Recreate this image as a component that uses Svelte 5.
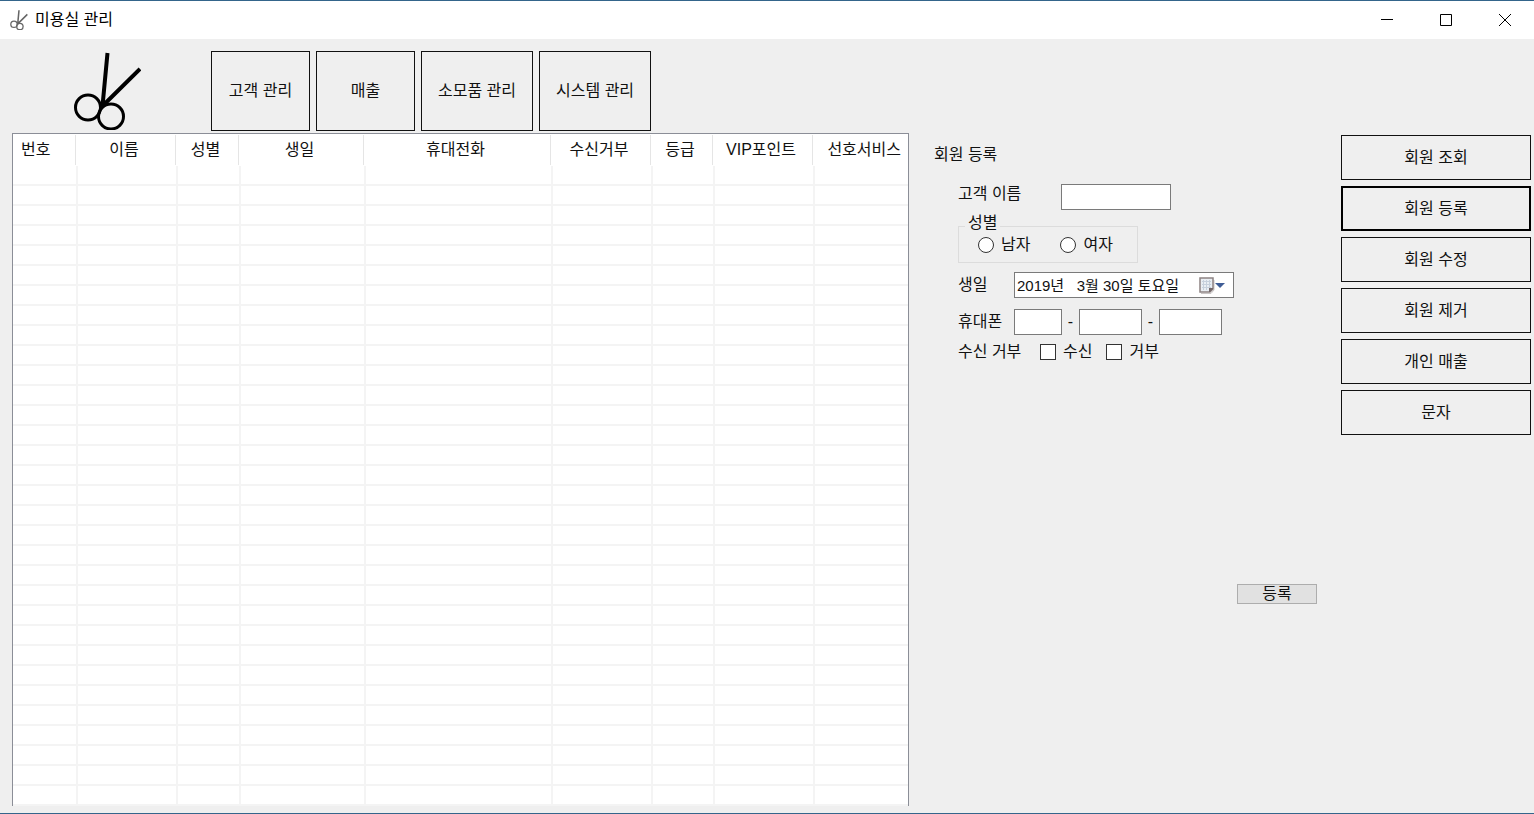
<script>
  const toolbar = ['고객 관리', '매출', '소모품 관리', '시스템 관리'];
  const columns = [
    { name: '번호', width: 63, align: 'start' },
    { name: '이름', width: 100 },
    { name: '성별', width: 63 },
    { name: '생일', width: 125 },
    { name: '휴대전화', width: 187 },
    { name: '수신거부', width: 100 },
    { name: '등급', width: 62 },
    { name: 'VIP포인트', width: 100 },
    { name: '선호서비스', width: 95, align: 'end' }
  ];
  const rows = Array.from({ length: 32 }, (_, i) => i);
  const actions = ['회원 조회', '회원 등록', '회원 수정', '회원 제거', '개인 매출', '문자'];

  let active = $state('회원 등록');
  let gender = $state('');
  let birthday = $state('2019년   3월 30일 토요일');
</script>

{#snippet scissors(blade, ring)}
  <path d="M33.500 1 L28.500 54 L66 17" stroke-width={blade} stroke-linejoin="bevel" />
  <circle cx="14" cy="55.500" r="12.500" stroke-width={ring} />
  <circle cx="37" cy="64.500" r="12.500" stroke-width={ring} />
{/snippet}

<div class="window">
  <header class="titlebar">
    <svg class="app-icon" viewBox="0 0 67 78" aria-hidden="true">{@render scissors(6, 5)}</svg>
    <h1>미용실 관리</h1>
    <div class="controls">
      <button type="button" aria-label="최소화">
        <svg viewBox="0 0 12 12"><path d="M0 5.500H12" /></svg>
      </button>
      <button type="button" aria-label="최대화">
        <svg viewBox="0 0 12 12"><path d="M.5 .5H11.500V11.500H.5Z" /></svg>
      </button>
      <button type="button" aria-label="닫기">
        <svg viewBox="0 0 12 12"><path d="M0 0L12 12M12 0L0 12" /></svg>
      </button>
    </div>
  </header>

  <nav class="toolbar">
    <svg class="logo" viewBox="0 0 67 78" aria-hidden="true">{@render scissors(4, 3)}</svg>
    <div class="tools">
      {#each toolbar as tool}
        <button type="button" class="flat">{tool}</button>
      {/each}
    </div>
  </nav>

  <main>
    <div class="list">
      <table>
        <colgroup>
          {#each columns as column}
            <col style="width: {column.width}px" />
          {/each}
        </colgroup>
        <thead>
          <tr>
            {#each columns as column}
              <th scope="col" class={column.align}>{column.name}</th>
            {/each}
          </tr>
        </thead>
        <tbody>
          {#each rows as row (row)}
            <tr>
              {#each columns as column}
                <td></td>
              {/each}
            </tr>
          {/each}
        </tbody>
      </table>
    </div>

    <form onsubmit={(event) => event.preventDefault()}>
      <h2>회원 등록</h2>
      <div class="fields">
        <div class="row name">
          <label for="customer">고객 이름</label>
          <input id="customer" type="text" />
        </div>

        <fieldset>
          <legend>성별</legend>
          <div class="options">
            <label><input type="radio" name="gender" value="남자" bind:group={gender} />남자</label>
            <label><input type="radio" name="gender" value="여자" bind:group={gender} />여자</label>
          </div>
        </fieldset>

        <div class="row birth">
          <label for="birthday">생일</label>
          <div class="picker">
            <input id="birthday" type="text" bind:value={birthday} />
            <button type="button" aria-label="달력 열기">
              <svg viewBox="0 0 26 17">
                <path d="M2 16.500H12L15 13V3" fill="none" stroke="#c9c5c5" />
                <path d="M1 1H14V12L11 15H1Z" fill="#e9eef3" stroke="#8d8383" stroke-width="1.500" />
                <path d="M3 4.500H12M3 7.500H12M3 10.500H12M4.500 3V13M7.500 3V13M10.500 3V12" stroke="#c6d0dc" fill="none" />
                <path d="M14 11V12L11 15H10V11Z" fill="#75696b" />
                <path d="M16 6H26L21 11Z" fill="#3f5d96" />
              </svg>
            </button>
          </div>
        </div>

        <div class="row phone">
          <label for="phone-first">휴대폰</label>
          <input id="phone-first" class="short" type="text" />
          <span>-</span>
          <input type="text" aria-label="휴대폰 가운데 자리" />
          <span>-</span>
          <input type="text" aria-label="휴대폰 끝자리" />
        </div>

        <div class="row consent" role="group" aria-labelledby="consent">
          <span id="consent">수신 거부</span>
          <label><input type="checkbox" />수신</label>
          <label><input type="checkbox" />거부</label>
        </div>
      </div>
      <button type="submit" class="submit">등록</button>
    </form>

    <aside>
      {#each actions as action}
        <button
          type="button"
          class="flat"
          class:active={active === action}
          onclick={() => (active = action)}>{action}</button>
      {/each}
    </aside>
  </main>
</div>

<style>
  :global(body) {
    margin: 0;
    background: #efefef;
  }

  .window {
    box-sizing: border-box;
    min-height: 100vh;
    border: solid #34658b;
    border-width: 1px 0;
    background: #efefef;
    color: #111;
    font: 16px/20px 'Liberation Sans', 'Noto Sans CJK KR', sans-serif;
  }

  .window *,
  .window *::before {
    box-sizing: border-box;
  }

  button,
  input {
    margin: 0;
    padding: 0;
    font: inherit;
    color: inherit;
  }

  h1,
  h2 {
    margin: 0;
    font-size: 16px;
    font-weight: 400;
  }

  svg {
    display: block;
    fill: none;
    stroke: #000;
  }

  .titlebar {
    display: flex;
    align-items: center;
    height: 38px;
    padding-left: 10px;
    background: #fff;
    color: #000;
  }

  .app-icon {
    width: 18px;
    height: 20px;
    margin-right: 7px;
    stroke: #666;
  }

  .controls {
    display: flex;
    align-self: stretch;
    margin-left: auto;
  }

  .controls button {
    display: grid;
    place-items: center;
    width: 59px;
    border: 0;
    background: none;
  }

  .controls svg {
    width: 12px;
    height: 12px;
  }

  .toolbar {
    display: flex;
    padding: 12px 12px 2px 74px;
  }

  .logo {
    width: 67px;
    height: 78px;
    margin-right: 70px;
    margin-top: 1px;
  }

  .tools {
    display: flex;
    gap: 6px;
  }

  .flat {
    border: 1px solid #111;
    background: #efefef;
  }

  .tools .flat {
    min-width: 99px;
    height: 80px;
    padding: 0 16px;
  }

  main {
    display: grid;
    grid-template-columns: 897fr 432fr 190px;
    padding: 0 3px 7px 12px;
  }

  .list {
    border: solid #8b8e97;
    border-width: 1px 1px 0;
    background: #fff;
  }

  table {
    width: 100%;
    table-layout: fixed;
    border-spacing: 0;
  }

  th {
    position: relative;
    height: 32px;
    padding: 0 4px 0 0;
    font-weight: 400;
    text-align: center;
    white-space: nowrap;
  }

  th.start {
    padding-left: 8px;
    text-align: left;
  }

  th.end {
    padding-right: 7px;
    text-align: right;
  }

  th:not(:last-child)::before {
    content: '';
    position: absolute;
    top: 1px;
    right: 0;
    bottom: 1px;
    border-right: 1px solid #e5e5e5;
  }

  td {
    height: 20px;
    padding: 0;
    border: solid #f4f4f4;
    border-width: 0 0 2px 2px;
  }

  td:first-child {
    border-left: 0;
  }

  form {
    display: flex;
    flex-direction: column;
    padding: 10px 24px 0 25px;
  }

  h2 {
    line-height: 24px;
  }

  .fields {
    padding: 17px 0 0 24px;
  }

  .row {
    display: flex;
    align-items: center;
  }

  input[type='text'] {
    width: 63px;
    height: 26px;
    padding: 0 3px;
    border: 1px solid #7a7a7a;
    border-radius: 0;
    background: #fff;
  }

  .name {
    align-items: flex-start;
  }

  .name label {
    width: 103px;
  }

  .row.name input {
    width: 110px;
  }

  fieldset {
    width: 180px;
    min-width: 0;
    margin: 3px 0 0;
    padding: 0 0 7px;
    border: 1px solid #dcdcdc;
  }

  legend {
    margin-left: 6px;
    padding: 0 3px 6px;
  }

  .options {
    display: flex;
    gap: 30px;
    margin-top: -4px;
    padding-left: 19px;
  }

  .options label,
  .consent label {
    display: flex;
    align-items: center;
    gap: 7px;
  }

  input[type='radio'],
  input[type='checkbox'] {
    appearance: none;
    width: 16px;
    height: 16px;
    border: 1px solid #333;
    background: #fff;
  }

  input[type='radio'] {
    border-radius: 50%;
  }

  input[type='radio']:checked {
    background: radial-gradient(#222 4px, #fff 5px);
  }

  input[type='checkbox']:checked {
    background: #333;
    box-shadow: inset 0 0 0 3px #fff;
  }

  .birth {
    margin-top: 9px;
  }

  .birth > label,
  .phone label {
    width: 56px;
  }

  .picker {
    display: flex;
    width: 220px;
    height: 26px;
    border: 1px solid #7a7a7a;
    background: #fff;
  }

  .picker input[type='text'] {
    flex: 1;
    min-width: 0;
    height: 22px;
    padding: 0 2px;
    border: 0;
    background: none;
    font-size: 15px;
  }

  .picker button {
    width: 34px;
    border: 0;
    background: none;
  }

  .picker svg {
    width: 26px;
    height: 17px;
    stroke: none;
  }

  .phone {
    margin-top: 11px;
  }

  .phone .short {
    width: 48px;
  }

  .phone span {
    width: 17px;
    text-align: center;
  }

  .consent {
    gap: 14px;
    margin-top: 7px;
  }

  .consent span {
    width: 68px;
  }

  .submit {
    align-self: flex-end;
    width: 80px;
    height: 20px;
    margin-top: 222px;
    border: 1px solid #adadad;
    background: #e1e1e1;
    line-height: 18px;
    overflow: hidden;
  }

  aside {
    display: flex;
    flex-direction: column;
    gap: 6px;
    padding-top: 2px;
  }

  aside .flat {
    height: 45px;
  }

  aside .active {
    border: 2px solid #000;
  }
</style>
